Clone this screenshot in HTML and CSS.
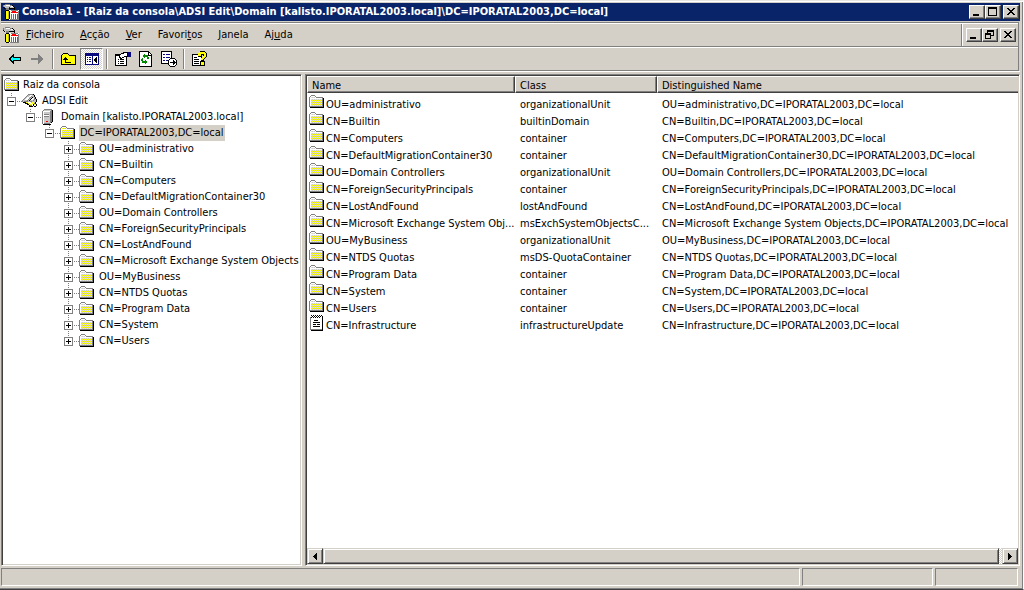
FILE: index.html
```html
<!DOCTYPE html>
<html lang="pt">
<head>
<meta charset="utf-8">
<title>Consola1</title>
<link rel="stylesheet" href="styles.css">
</head>
<body>
<svg class="defs" width="0" height="0" aria-hidden="true">
  <defs>
    <pattern id="dither" width="2" height="2" patternUnits="userSpaceOnUse">
      <path fill="#ccc" d="M0 0h2v2h-2z"/><path fill="#ff0" d="M1 0h1v1h-1zM0 1h1v1h-1z"/>
    </pattern>
    <pattern id="dither-alt" width="2" height="2" patternUnits="userSpaceOnUse">
      <path fill="#ccc" d="M0 0h2v2h-2z"/><path fill="#ff0" d="M0 0h1v1h-1zM1 1h1v1h-1z"/>
    </pattern>
    <symbol id="folder-frame" viewBox="0 0 16 16">
      <path fill="#808080" d="M2 1h4v1h-4zM1 2h1v1h-1zM6 2h1v1h-1zM0 3h1v10h-1zM7 3h7v1h-7zM13 4h1v9h-1zM1 12h13v1h-13z"/>
      <path fill="#fff" d="M2 2h4v1h-4zM1 3h6v1h-6zM1 4h12v1h-12zM1 4h1v8h-1z"/>
      <path fill="#000" d="M14 4h1v10h-1zM1 13h14v1h-14z"/>
    </symbol>
    <symbol id="folder" viewBox="0 0 16 16">
      <use href="#folder-frame" width="16" height="16"/><path fill="url(#dither)" d="M2 5h11v7h-11zM2 3h4v1h-4z"/>
    </symbol>
    <symbol id="folder-root" viewBox="0 0 16 16">
      <use href="#folder-frame" width="16" height="16"/><path fill="url(#dither-alt)" d="M2 5h11v7h-11zM2 3h4v1h-4z"/>
    </symbol>
    <symbol id="doc" viewBox="0 0 16 16">
      <path fill="#fff" d="M2 2h11v13h-11z"/>
      <path fill="#808080" d="M1 2h1v13h-1zM2 14h11v1h-11z"/>
      <path fill="#000" d="M2 0h1v1h-1zM4 0h1v1h-1zM6 0h1v1h-1zM8 0h1v1h-1zM10 0h1v1h-1zM12 0h1v1h-1zM3 1h1v1h-1zM5 1h1v1h-1zM7 1h1v1h-1zM9 1h1v1h-1zM11 1h1v1h-1zM2 2h1v1h-1zM4 2h1v1h-1zM6 2h1v1h-1zM8 2h1v1h-1zM10 2h1v1h-1zM13 1h1v14h-1zM2 15h12v1h-12zM5 5h4v1h-4zM4 7h7v1h-7zM4 9h3v1h-3zM8 9h3v1h-3zM4 11h7v1h-7z"/>
    </symbol>
    <symbol id="tools" viewBox="0 0 16 16">
      <path fill="#fff" d="M6 6h10v10h-10z"/>
      <path fill="#808080" d="M8 6h7v1h-7zM6 8h1v7h-1zM15 7h1v9h-1zM7 15h8v1h-8z"/>
      <path fill="#f00" d="M9 7h4v1h-4zM8 8h7v1h-7z"/>
      <path fill="#c04080" d="M8 10h1v5h-1zM10 10h1v5h-1z"/><path fill="#4040ff" d="M12 10h1v5h-1z"/><path fill="#a04080" d="M14 10h1v5h-1z"/>
      <path fill="#c0c0c0" d="M1 1h7v2h-7zM2 3h4v1h-4zM7 2h4v2h-4z"/>
      <path fill="#fff" d="M3 1h4v1h-4zM8 2h2v1h-2z"/>
      <path fill="#808080" d="M2 0h5v1h-5zM0 1h1v2h-1zM3 4h3v2h-3zM7 1h2v1h-2z"/>
      <path fill="#000" d="M0 3h1v1h-1zM1 4h1v1h-1zM6 4h3v1h-3zM9 1h1v1h-1zM10 2h1v1h-1zM11 3h1v3h-1zM9 4h2v1h-2zM2 7h1v8h-1zM6 7h1v8h-1zM3 15h3v1h-3zM3 6h3v1h-3z"/>
      <path fill="#ff0" d="M3 7h2v8h-2z"/><path fill="#c0c000" d="M5 7h1v8h-1z"/>
    </symbol>
    <symbol id="adsi" viewBox="0 0 16 16">
      <path fill="#c0c0c0" d="M6 1h6v1h1v2h1v2h1v3l-4 3-3-3h-7v-2l5-5z"/>
      <path fill="#fff" d="M5 4h2v1h-2zM4 5h3v1h-3zM3 6h3v1h-3zM8 2h2v1h-2zM7 3h2v1h-2zM10 5h2v1h-2zM9 6h2v1h-2z"/>
      <path fill="#808080" d="M6 1h5v1h-5zM5 2h1v1h-1zM4 3h1v1h-1zM3 4h1v1h-1zM2 5h1v1h-1zM1 6h1v1h-1zM0 7h1v2h-1zM9 3h1v1h-1zM8 4h1v1h-1zM7 5h1v1h-1zM6 6h1v1h-1zM5 7h1v1h-1zM12 5h1v2h-1zM11 7h1v1h-1zM2 8h4v1h-4zM8 8h2v1h-2z"/>
      <path fill="#000" d="M11 1h1v1h-1zM12 2h1v2h-1zM13 4h1v2h-1zM14 6h1v3h-1zM1 9h3v1h-3zM3 10h3v1h-3zM5 11h2v1h-2zM7 12h1v2h-1zM8 13h3v1h-3zM11 11h1v2h-1zM13 9h1v2h-1zM14 11h1v2h-1zM12 13h2v1h-2zM10 4h1v1h-1zM9 5h1v1h-1zM8 6h1v1h-1zM7 7h1v1h-1z"/>
      <path fill="#ff0" d="M4 9h2v1h-2zM6 10h2v1h-2zM8 11h2v1h-2zM10 9h2v2h-2zM12 11h1v1h-1z"/>
      <path fill="#808000" d="M8 12h2v1h-2zM12 10h1v1h-1z"/>
    </symbol>
    <symbol id="server" viewBox="0 0 16 16">
      <path fill="#808080" d="M3 0h8v1h-8zM1 2h1v13h-1zM2 1h1v1h-1zM3 14h6v1h-6z"/>
      <path fill="#c8c8c8" d="M3 1h7v1h-7zM2 2h7v12h-7z"/>
      <path fill="#808080" d="M9 2h1v12h-1zM10 1h1v12h-1zM3 5h5v1h-5zM3 7h5v1h-5z"/>
      <path fill="#fff" d="M2 2h7v1h-7zM2 2h1v12h-1zM3 6h5v1h-5z"/>
      <path fill="#000" d="M11 1h1v12h-1zM10 13h1v1h-1zM2 15h8v1h-8z"/><path fill="#f00" d="M5 12h2v1h-2z"/>
    </symbol>
    <symbol id="node-minus" viewBox="0 0 19 16">
      <path stroke="#808080" stroke-dasharray="1 1" fill="none" d="M8.500 0v4M14 8.500h5"/>
      <path stroke="#808080" fill="#fff" d="M4.500 4.500h8v8h-8z"/><path fill="#000" d="M6 8h5v1h-5z"/>
    </symbol>
    <symbol id="node-end" viewBox="0 0 19 16">
      <use href="#node-minus" width="19" height="16"/><path fill="#000" d="M8 6h1v5h-1z"/>
    </symbol>
    <symbol id="node-plus" viewBox="0 0 19 16">
      <use href="#node-end" width="19" height="16"/><path stroke="#808080" stroke-dasharray="1 1" d="M8.500 14v2"/>
    </symbol>
    <symbol id="close" viewBox="0 0 8 7"><path d="M0 0h2v1h-2zM6 0h2v1h-2zM1 1h2v1h-2zM5 1h2v1h-2zM2 2h4v1h-4zM3 3h2v1h-2zM2 4h4v1h-4zM1 5h2v1h-2zM5 5h2v1h-2zM0 6h2v1h-2zM6 6h2v1h-2z"/></symbol>
  </defs>
</svg>
<div class="window">
  <header class="titlebar">
    <svg class="icon"><use href="#tools"/></svg>
    <h1 class="title">Consola1 - [Raiz da consola\ADSI Edit\Domain [kalisto.IPORATAL2003.local]\DC=IPORATAL2003,DC=local]</h1>
    <div class="controls">
      <button class="ctl" aria-label="Minimizar"><svg width="9" height="9"><path d="M1 7h6v2h-6z"/></svg></button>
      <button class="ctl" aria-label="Maximizar"><svg width="9" height="9"><path d="M0 0h9v9h-9zM1 2v6h7v-6z" fill-rule="evenodd"/></svg></button>
      <button class="ctl ctl-close" aria-label="Fechar"><svg width="8" height="7"><use href="#close"/></svg></button>
    </div>
  </header>
  <div class="bands">
    <div class="menurow">
      <nav class="menubar">
        <svg class="icon"><use href="#tools"/></svg>
        <button class="menu"><u>F</u>icheiro</button>
        <button class="menu"><u>A</u>cção</button>
        <button class="menu"><u>V</u>er</button>
        <button class="menu">Favori<u>t</u>os</button>
        <button class="menu"><u>J</u>anela</button>
        <button class="menu">Aj<u>u</u>da</button>
      </nav>
      <div class="controls child">
        <button class="ctl" aria-label="Minimizar janela"><svg width="9" height="9"><path d="M1 7h6v2h-6z"/></svg></button>
        <button class="ctl" aria-label="Restaurar janela"><svg width="9" height="9"><path fill-rule="evenodd" d="M2 0h7v6h-3v3h-6v-6h2zM3 2v1h3v2h2v-3zM1 5v3h4v-3z"/></svg></button>
        <button class="ctl ctl-close" aria-label="Fechar janela"><svg width="8" height="7"><use href="#close"/></svg></button>
      </div>
    </div>
    <div class="toolbar">
      <button class="tool" aria-label="Retroceder"><svg class="icon"><path fill="#000" d="M6 3h1v3h7v4h-7v3h-1v-1h-1v-1h-1v-1h-1v-1h-1v-2h1v-1h1v-1h1v-1h1z"/><path fill="#0ff" d="M5 6h1v1h7v2h-7v1h-1v-1h-1v-2h1z"/></svg></button>
      <button class="tool" aria-label="Avançar"><svg class="icon"><path fill="#808080" d="M8 3h1v1h1v1h1v1h1v1h1v2h-1v1h-1v1h-1v1h-1v1h-1v-4h-7v-2h7z"/></svg></button>
      <span class="sep"></span>
      <button class="tool" aria-label="Subir um nível"><svg class="icon"><path d="M2 2h5v1h-5zM1 3h1v1h-1zM7 3h1v1h-1zM0 4h1v10h-1zM8 4h7v1h-7zM14 5h1v9h-1zM1 13h14v1h-14z"/><path fill="#ff0" d="M2 3h5v1h1v1h6v8h-13v-9h1z"/><path d="M4 6h1v1h1v1h1v1h-2v2h5v1h-6v-3h-2v-1h1v-1h1z"/></svg></button>
      <button class="tool pressed" aria-label="Mostrar árvore" aria-pressed="true"><svg class="icon"><path fill="#0a0a80" d="M1 2h14v12h-14z"/><path fill="#fff" d="M2 5h6v8h-6zM9 5h5v8h-5z"/><path fill="#0a0a80" d="M3 6h1v1h-1zM5 6h2v1h-2zM3 8h1v1h-1zM5 8h2v1h-2zM3 10h1v1h-1zM5 10h2v1h-2z"/><path d="M12 6h1v6h-1v-1h-1v-1h-1v-2h1v-1h1z"/></svg></button>
      <span class="sep"></span>
      <button class="tool" aria-label="Propriedades"><svg class="icon"><path fill="#fff" stroke="#000" d="M.5 4.500h11v10h-11z"/><path d="M0 3h6v2h-6zM3 8h1v1h-1zM5 8h4v1h-4zM3 10h1v1h-1zM5 10h4v1h-4zM3 12h1v1h-1zM5 12h4v1h-4z"/><path fill="#fff" stroke="#000" d="M4.500 6.500v-2l2-2h2v-1h4v4h-3l-3 2z"/><path fill="#0a0a80" d="M13 1h3v5h-3z"/></svg></button>
      <button class="tool" aria-label="Actualizar"><svg class="icon"><path fill="#fff" stroke="#000" d="M1.500.5h9l3 3v12h-12z"/><path fill="none" stroke="#000" d="M10.500 1v3h3"/><path fill="#080" d="M6 3h1v1h3v2h1v2h-2v-2h-2v1h-1v-1h-1v-2h1zM4 7h1v3h2v-1h1v1h1v2h-1v1h-1v-1h-3v-2h-1v-2h1z"/></svg></button>
      <button class="tool" aria-label="Exportar lista"><svg class="icon"><path fill="#fff" stroke="#000" d="M.5.500h10v12h-10z"/><path fill="#0a0a80" d="M2 3h2v1h-2zM5 3h4v1h-4zM2 6h2v1h-2zM5 6h4v1h-4zM2 9h2v1h-2zM5 9h2v1h-2z"/><path fill="#fff" stroke="#000" d="M9.500 7.500h4l2 2v4l-2 2h-4l-2-2v-4z"/><path d="M9 11h3v-2h1v1h1v1h1v1h-1v1h-1v1h-1v-2h-3z"/></svg></button>
      <span class="sep"></span>
      <button class="tool" aria-label="Ajuda"><svg class="icon"><path fill="#fff" stroke="#000" d="M.5 3.500h9v11h-9z"/><path d="M2 6h3v1h-3zM2 8h5v1h-5zM2 10h5v1h-5zM2 12h5v1h-5zM7 0h6v1h1v1h1v4h-1v1h-1v1h-1v2h1v5h-5v-5h1v-3h1v-1h1v-2h-1v2h-4v-4h1v-1h1z"/><path fill="#ff0" d="M7 1h6v1h1v4h-1v1h-1v1h-1v1h-2v-2h1v-1h1v-1h1v-2h-3v2h-3v-3h1zM9 11h3v3h-3z"/></svg></button>
    </div>
  </div>
  <main class="panes">
    <section class="pane treepane">
      <ul class="tree">
        <li class="node l1"><svg class="icon"><use href="#folder-root"/></svg><span class="label">Raiz da consola</span></li>
        <li class="node l2"><button class="exp" aria-label="Fechar ramo"><svg><use href="#node-minus"/></svg></button><svg class="icon"><use href="#adsi"/></svg><span class="label">ADSI Edit</span></li>
        <li class="node l3"><button class="exp" aria-label="Fechar ramo"><svg><use href="#node-minus"/></svg></button><svg class="icon"><use href="#server"/></svg><span class="label">Domain [kalisto.IPORATAL2003.local]</span></li>
        <li class="node l4"><button class="exp" aria-label="Fechar ramo"><svg><use href="#node-minus"/></svg></button><svg class="icon"><use href="#folder"/></svg><span class="label selected">DC=IPORATAL2003,DC=local</span></li>
        <li class="node l5"><button class="exp" aria-label="Abrir ramo"><svg><use href="#node-plus"/></svg></button><svg class="icon"><use href="#folder"/></svg><span class="label">OU=administrativo</span></li>
        <li class="node l5"><button class="exp" aria-label="Abrir ramo"><svg><use href="#node-plus"/></svg></button><svg class="icon"><use href="#folder"/></svg><span class="label">CN=Builtin</span></li>
        <li class="node l5"><button class="exp" aria-label="Abrir ramo"><svg><use href="#node-plus"/></svg></button><svg class="icon"><use href="#folder"/></svg><span class="label">CN=Computers</span></li>
        <li class="node l5"><button class="exp" aria-label="Abrir ramo"><svg><use href="#node-plus"/></svg></button><svg class="icon"><use href="#folder"/></svg><span class="label">CN=DefaultMigrationContainer30</span></li>
        <li class="node l5"><button class="exp" aria-label="Abrir ramo"><svg><use href="#node-plus"/></svg></button><svg class="icon"><use href="#folder"/></svg><span class="label">OU=Domain Controllers</span></li>
        <li class="node l5"><button class="exp" aria-label="Abrir ramo"><svg><use href="#node-plus"/></svg></button><svg class="icon"><use href="#folder"/></svg><span class="label">CN=ForeignSecurityPrincipals</span></li>
        <li class="node l5"><button class="exp" aria-label="Abrir ramo"><svg><use href="#node-plus"/></svg></button><svg class="icon"><use href="#folder"/></svg><span class="label">CN=LostAndFound</span></li>
        <li class="node l5"><button class="exp" aria-label="Abrir ramo"><svg><use href="#node-plus"/></svg></button><svg class="icon"><use href="#folder"/></svg><span class="label">CN=Microsoft Exchange System Objects</span></li>
        <li class="node l5"><button class="exp" aria-label="Abrir ramo"><svg><use href="#node-plus"/></svg></button><svg class="icon"><use href="#folder"/></svg><span class="label">OU=MyBusiness</span></li>
        <li class="node l5"><button class="exp" aria-label="Abrir ramo"><svg><use href="#node-plus"/></svg></button><svg class="icon"><use href="#folder"/></svg><span class="label">CN=NTDS Quotas</span></li>
        <li class="node l5"><button class="exp" aria-label="Abrir ramo"><svg><use href="#node-plus"/></svg></button><svg class="icon"><use href="#folder"/></svg><span class="label">CN=Program Data</span></li>
        <li class="node l5"><button class="exp" aria-label="Abrir ramo"><svg><use href="#node-plus"/></svg></button><svg class="icon"><use href="#folder"/></svg><span class="label">CN=System</span></li>
        <li class="node l5"><button class="exp" aria-label="Abrir ramo"><svg><use href="#node-end"/></svg></button><svg class="icon"><use href="#folder"/></svg><span class="label">CN=Users</span></li>
      </ul>
    </section>
    <section class="pane listpane">
      <div class="listbody">
        <table class="list">
          <colgroup><col class="c-name"><col class="c-class"><col></colgroup>
          <thead><tr><th>Name</th><th>Class</th><th>Distinguished Name</th></tr></thead>
          <tbody>
            <tr><td><div class="item"><svg class="icon"><use href="#folder"/></svg>OU=administrativo</div></td><td>organizationalUnit</td><td>OU=administrativo,DC=IPORATAL2003,DC=local</td></tr>
            <tr><td><div class="item"><svg class="icon"><use href="#folder"/></svg>CN=Builtin</div></td><td>builtinDomain</td><td>CN=Builtin,DC=IPORATAL2003,DC=local</td></tr>
            <tr><td><div class="item"><svg class="icon"><use href="#folder"/></svg>CN=Computers</div></td><td>container</td><td>CN=Computers,DC=IPORATAL2003,DC=local</td></tr>
            <tr><td><div class="item"><svg class="icon"><use href="#folder"/></svg>CN=DefaultMigrationContainer30</div></td><td>container</td><td>CN=DefaultMigrationContainer30,DC=IPORATAL2003,DC=local</td></tr>
            <tr><td><div class="item"><svg class="icon"><use href="#folder"/></svg>OU=Domain Controllers</div></td><td>organizationalUnit</td><td>OU=Domain Controllers,DC=IPORATAL2003,DC=local</td></tr>
            <tr><td><div class="item"><svg class="icon"><use href="#folder"/></svg>CN=ForeignSecurityPrincipals</div></td><td>container</td><td>CN=ForeignSecurityPrincipals,DC=IPORATAL2003,DC=local</td></tr>
            <tr><td><div class="item"><svg class="icon"><use href="#folder"/></svg>CN=LostAndFound</div></td><td>lostAndFound</td><td>CN=LostAndFound,DC=IPORATAL2003,DC=local</td></tr>
            <tr><td><div class="item"><svg class="icon"><use href="#folder"/></svg>CN=Microsoft Exchange System Obj...</div></td><td>msExchSystemObjectsC...</td><td>CN=Microsoft Exchange System Objects,DC=IPORATAL2003,DC=local</td></tr>
            <tr><td><div class="item"><svg class="icon"><use href="#folder"/></svg>OU=MyBusiness</div></td><td>organizationalUnit</td><td>OU=MyBusiness,DC=IPORATAL2003,DC=local</td></tr>
            <tr><td><div class="item"><svg class="icon"><use href="#folder"/></svg>CN=NTDS Quotas</div></td><td>msDS-QuotaContainer</td><td>CN=NTDS Quotas,DC=IPORATAL2003,DC=local</td></tr>
            <tr><td><div class="item"><svg class="icon"><use href="#folder"/></svg>CN=Program Data</div></td><td>container</td><td>CN=Program Data,DC=IPORATAL2003,DC=local</td></tr>
            <tr><td><div class="item"><svg class="icon"><use href="#folder"/></svg>CN=System</div></td><td>container</td><td>CN=System,DC=IPORATAL2003,DC=local</td></tr>
            <tr><td><div class="item"><svg class="icon"><use href="#folder"/></svg>CN=Users</div></td><td>container</td><td>CN=Users,DC=IPORATAL2003,DC=local</td></tr>
            <tr><td><div class="item"><svg class="icon"><use href="#doc"/></svg>CN=Infrastructure</div></td><td>infrastructureUpdate</td><td>CN=Infrastructure,DC=IPORATAL2003,DC=local</td></tr>
          </tbody>
        </table>
      </div>
      <div class="scrollbar">
        <button class="arrow" aria-label="Deslocar para a esquerda"><svg width="4" height="7"><path d="M3 0h1v7h-1v-1h-1v-1h-1v-1h-1v-1h1v-1h1v-1h1z"/></svg></button>
        <div class="track"><div class="thumb"></div></div>
        <button class="arrow" aria-label="Deslocar para a direita"><svg width="4" height="7"><path d="M0 0h1v1h1v1h1v1h1v1h-1v1h-1v1h-1v1h-1z"/></svg></button>
      </div>
    </section>
  </main>
  <footer class="status"><div class="cell"></div><div class="cell mid"></div><div class="cell last"></div></footer>
</div>
</body>
</html>
```

FILE: styles.css
```css
* { box-sizing: border-box; }
body {
  margin: 0;
  background: #d4d0c8;
  color: #000;
  font: 11px/16px "DejaVu Sans Condensed", "Noto Sans", sans-serif;
}
button { font: inherit; color: inherit; background: none; border: 0; padding: 0; margin: 0; }
svg { display: block; flex: none; shape-rendering: crispEdges; }
.defs { position: absolute; }
.icon { width: 16px; height: 16px; }
.window {
  display: flex;
  flex-direction: column;
  min-height: 100vh;
  padding: 2px 3px 2px 1px;
  border-top: 1px solid #e8e6e0;
  border-right: 1px solid #fff;
  border-bottom: 1px solid #404040;
  box-shadow: inset 0 1px #fff, inset -1px -1px #808080;
}
.titlebar {
  display: flex;
  align-items: center;
  height: 18px;
  padding: 0 1px 0 2px;
  background: #0a246a;
  color: #fff;
}
.title { flex: 1; margin: 0 0 0 3px; font-size: 11px; line-height: 16px; font-weight: bold; white-space: nowrap; }
.controls { display: flex; }
.ctl {
  display: flex;
  width: 16px;
  height: 14px;
  padding: 1px 2px;
  background: #d4d0c8;
  border: 1px solid;
  border-color: #fff #404040 #404040 #fff;
  box-shadow: inset -1px -1px #808080;
}
.ctl-close { margin-left: 2px; padding: 2px 3px; }
.bands { margin: 1px 1px 0 0; border: 1px solid #808080; border-left: 0; border-bottom: 0; }
.menurow {
  display: flex;
  height: 24px;
  border-top: 1px solid #fff;
  border-bottom: 1px solid #808080;
}
.menubar { flex: 1; display: flex; align-items: center; padding-left: 2px; border-right: 1px solid #808080; }
.menu { height: 20px; padding: 0 8px; }
.menubar .icon { margin-right: -1px; }
.child { padding: 4px 2px 0 3px; border-left: 1px solid #fff; }
.toolbar {
  display: flex;
  height: 24px;
  padding-left: 2px;
  border-top: 1px solid #fff;
  border-bottom: 1px solid #808080;
}
.tool { display: flex; align-items: center; justify-content: center; width: 23px; height: 22px; }
.pressed {
  border: 1px solid;
  border-color: #808080 #fff #fff #808080;
  background: repeating-conic-gradient(#fff 0 25%, #d4d0c8 0 50%) 0 0 / 2px 2px;
}
.sep { width: 2px; margin: 1px 3px; border-left: 1px solid #808080; border-right: 1px solid #fff; }
.panes { flex: 1; display: flex; gap: 3px; padding: 2px 0 0; border-top: 1px solid #fff; }
.pane {
  background: #fff;
  border: 1px solid;
  border-color: #808080 #fff #fff #808080;
  box-shadow: inset 1px 1px #404040, inset -1px -1px #d4d0c8;
}
.treepane { flex: none; width: 301px; padding: 2px 1px 1px; }
.tree { list-style: none; margin: 0; padding: 0; }
.node { display: flex; height: 16px; white-space: nowrap; }
.node .icon { margin-right: 3px; }
.l1 { padding-left: 1px; }
.l1 .icon { margin-right: 2px; }
.l3 { padding-left: 19px; }
.l4 { padding-left: 38px; }
.l5 { padding-left: 57px; }
.exp, .exp svg { width: 19px; height: 16px; }
.label { padding: 0 1px; }
.selected { background: #d4d0c8; }
.listpane { flex: 1; min-width: 0; display: flex; flex-direction: column; padding: 1px; }
.listbody { flex: 1; overflow: hidden; }
.list { width: 100%; table-layout: fixed; border-collapse: separate; border-spacing: 0; }
.c-name { width: 208px; }
.c-class { width: 142px; }
.list th {
  height: 17px;
  padding: 2px 4px 0;
  font-weight: normal;
  line-height: 13px;
  text-align: left;
  background: #d4d0c8;
  border: 1px solid;
  border-color: #fff #404040 #404040 #fff;
  box-shadow: inset -1px -1px #808080;
}
.list th:last-child { border-right: 0; box-shadow: inset 0 -1px #808080; }
.list td { height: 17px; padding: 0 0 0 5px; white-space: nowrap; line-height: 17px; }
.list td:first-child { padding-left: 2px; }
.list tbody tr:first-child td { height: 20px; padding-top: 3px; }
.item { display: flex; gap: 1px; }
.item .icon { margin-top: -2px; }
.scrollbar { display: flex; height: 16px; }
.arrow, .thumb {
  background: #d4d0c8;
  border: 1px solid;
  border-color: #d4d0c8 #404040 #404040 #d4d0c8;
  box-shadow: inset 1px 1px #fff, inset -1px -1px #808080;
}
.arrow { display: flex; align-items: center; justify-content: center; width: 16px; }
.track { flex: 1; background: repeating-conic-gradient(#fff 0 25%, #d4d0c8 0 50%) 0 0 / 2px 2px; }
.thumb { height: 16px; margin-right: 3px; }
.status { display: flex; gap: 2px; padding: 2px 2px 1px 0; }
.cell { flex: 1; height: 18px; border: 1px solid; border-color: #808080 #fff #fff #808080; }
.mid { flex: none; width: 131px; }
.last { flex: none; width: 83px; }
```
